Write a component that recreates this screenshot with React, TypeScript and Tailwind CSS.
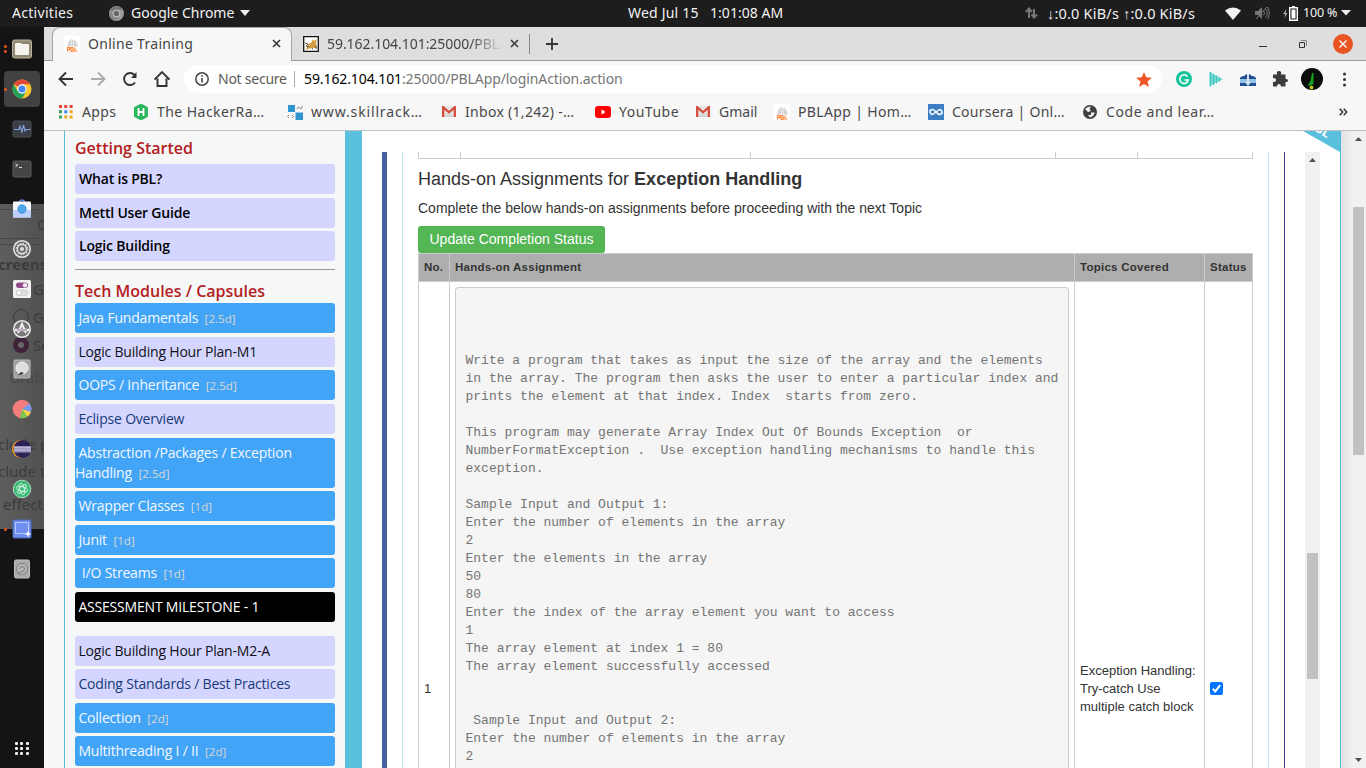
import React from "react";

const ui = "font-['Noto_Sans',sans-serif]";

const Chrome = ({ mono = false, s = 20 }: { mono?: boolean; s?: number }) => (
  <svg width={s} height={s} viewBox="0 0 20 20" className="block shrink-0">
    <circle cx="10" cy="10" r="10" fill={mono ? "#9a9a9a" : "#fbc62f"} />
    <path d="M10 10 1.3 5A10 10 0 0 1 18.7 5H10z" fill={mono ? "#777" : "#e14a3b"} />
    <path d="M1.3 5A10 10 0 0 0 10 20l4.3-7.5L10 10 5.7 12.5z" fill={mono ? "#868686" : "#27a05a"} />
    <circle cx="10" cy="10" r="4.9" fill={mono ? "#c8c8c8" : "#fff"} />
    <circle cx="10" cy="10" r="3.7" fill={mono ? "#666" : "#4285f4"} />
  </svg>
);

const Pbl = () => (
  <svg width="16" height="16" viewBox="0 0 16 16" className="block shrink-0">
    <path d="M0 0h16v16H0z" fill="#fff" />
    <path d="M3 10.500Q4 5 7 3v7.500zM7.500 10.500V2.500l2 2v6zM10 10.500V3q3 3 4 7.500z" fill="#d5d5d5" />
    <path d="M3.500 15.500v-4h1.700q1.300 1.200 0 2.200H3.500M7 11.500v4h1.800q1.500-1 0-2 1-1.200-.3-2zM11 11.500v3.500h2.500" fill="none" stroke="#ff7f2a" strokeWidth="1.100" />
  </svg>
);

const Gmail = () => (
  <svg width="14" height="11" viewBox="0 0 14 11" className="block shrink-0">
    <path d="M0 0h14v11H0z" fill="#e6e6e6" />
    <path d="M2 11 7 5.500 12 11z" fill="#d4d4d4" />
    <path d="M1.200 11V1.200L7 6.300l5.800-5.100V11" fill="none" stroke="#d54b3d" strokeWidth="2.300" />
  </svg>
);

const CloseX = () => (
  <svg width="9" height="9" viewBox="0 0 9 9" className="block shrink-0">
    <path d="m1 1 7 7M8 1 1 8" stroke="#3c3c3c" strokeWidth="1.700" />
  </svg>
);

function TopBar() {
  return (
    <div className={`flex h-[27px] shrink-0 items-center bg-[#1d1d1d] pb-px text-[14px] leading-[26px] whitespace-pre text-[#f2f2f2] ${ui}`}>
      <div className="w-[109px] pl-3 tracking-[0.3px]">Activities</div>
      <Chrome mono s={15} />
      <div className="w-[116px] pl-[7px]">Google Chrome</div>
      <svg width="10" height="6" viewBox="0 0 10 6"><path d="M0 0h10L5 6z" fill="#eee" /></svg>
      <div className="ml-[378px] w-[82px] tracking-[0.2px]">Wed Jul 15</div>
      <div className="w-[315px] tracking-[0.05px]">1:01:08 AM</div>
      <svg width="13" height="12" viewBox="0 0 13 12"><path d="M4 11V3M1 5l3-3.500L7 5M9 2v7M6.500 7.500 9 10.500l3-3" stroke="#777" strokeWidth="2" fill="none" /></svg>
      <div className="ml-[9px] w-[178px] text-[14.500px] tracking-[0.200px]">↓:0.0 KiB/s ↑:0.0 KiB/s</div>
      <svg width="16" height="13" viewBox="0 0 16 13"><path d="M0 3.500Q8-2.500 16 3.500L8 13z" fill="#f4f4f4" /></svg>
      <svg width="16" height="16" viewBox="0 0 16 16" className="ml-[13px]" fill="none" stroke="#777"><path d="M1 6h3l4-4v12l-4-4H1z" fill="#777" stroke="none" /><path d="M9.500 5.500q2 2.500 0 5M11.500 3.500q3.500 4.500 0 9M13.500 2q3.500 6 0 12M2 14 13 2" /></svg>
      <svg width="15" height="15" viewBox="0 0 15 15" className="ml-[13px]"><path d="M3.500 3 0 8h2l-.5 4L4.500 7h-2z" fill="#aaa" /><path d="M6.700 1.700h7.600v12.600H6.700zM9 .7h3" fill="none" stroke="#fff" strokeWidth="1.400" /><path d="M8.500 3.500h4v9h-4z" fill="#fff" /></svg>
      <div className="ml-[5px] w-[38px] text-[12.500px] tracking-[-0.2px]">100 %</div>
      <svg width="10" height="6" viewBox="0 0 10 6"><path d="M0 0h10L5 5.500z" fill="#eee" /></svg>
    </div>
  );
}

const dockIcons: { dot?: number; active?: boolean; el: React.ReactNode }[] = [
  { dot: 2, el: <><rect x="4.500" y="5" width="19" height="18" rx="2" fill="#8f8873" stroke="#b9b39f" /><path d="M8 8h5l1 1h6q1 0 1 1v9q0 1-1 1H8q-1 0-1-1V9q0-1 1-1z" fill="#f5f3ee" /></> },
  { dot: 1, active: true, el: <g transform="translate(4.500 4.500) scale(.95)"><circle cx="10" cy="10" r="10" fill="#fbc62f" /><path d="M10 10 1.300 5A10 10 0 0 1 18.700 5H10z" fill="#e14a3b" /><path d="M1.300 5A10 10 0 0 0 10 20l4.300-7.500L10 10 5.700 12.500z" fill="#27a05a" /><circle cx="10" cy="10" r="4.900" fill="#fff" /><circle cx="10" cy="10" r="3.700" fill="#4285f4" /></g> },
  { el: <><rect x="5" y="6" width="18" height="16" rx="1.500" fill="#3b3d44" stroke="#4c4e55" /><path d="M6 14.500h5l1-3.500 2 6 1.500-7 1.500 6 1-1.500h4.500" fill="none" stroke="#88a4e8" strokeWidth="1.100" /></> },
  { el: <><rect x="5" y="6" width="18" height="16" rx="1.500" fill="#454545" stroke="#5c5c5c" /><path d="m7.500 9 2.500 1.300-2.500 1.300M11 12.500h3" fill="none" stroke="#ddd" /></> },
  { el: <><path d="M11 7q3-4 6 0" fill="none" stroke="#5e83d5" strokeWidth="1.300" /><rect x="5" y="6.500" width="18" height="16" rx="1" fill="#f4f6fa" /><path d="M5 15h18v7.500H5z" fill="#bdcffa" /><circle cx="14" cy="14" r="4.500" fill="#1a86dc" /><path d="M9.500 14h9M14 9.500v9M12 10v8M16 10v8M10 12h8M10 16h8" stroke="#9fd0f6" strokeWidth=".5" /></> },
  { el: <><circle cx="14" cy="14" r="8.300" fill="#6b6b6b" stroke="#e9e9e9" strokeWidth="1.500" /><circle cx="14" cy="14" r="4.500" fill="none" stroke="#e0e0e0" strokeWidth="1.300" /><circle cx="14" cy="14" r="5.600" fill="none" stroke="#e0e0e0" strokeWidth="1.300" strokeDasharray="1.500 1.430" /><circle cx="14" cy="14" r="2" fill="#e0e0e0" /></> },
  { el: <><rect x="5" y="5" width="18" height="18" rx="1.500" fill="#f3f0f0" /><rect x="8" y="7.500" width="12" height="5.500" rx="2.700" fill="#924a8b" /><circle cx="17" cy="10.200" r="2.200" fill="#eee" /><rect x="8" y="15" width="12" height="5.500" rx="2.700" fill="#ddd" stroke="#bbb" strokeWidth=".5" /><circle cx="10.800" cy="17.700" r="2.400" fill="#fff" stroke="#aaa" strokeWidth=".5" /></> },
  { el: <><circle cx="14" cy="14" r="8.300" fill="#777" stroke="#ececec" strokeWidth="1.500" /><path d="m10 18 4-9 4 9" fill="none" stroke="#eee" strokeWidth="2" /><path d="M7 15h14" stroke="#eee" strokeWidth="2.400" /><path d="M9 15h10" stroke="#8d5a86" strokeWidth=".9" /></> },
  { el: <><rect x="6" y="5" width="16" height="18" rx="1" fill="#9f9f9f" stroke="#bbb" /><circle cx="14" cy="13" r="6" fill="#dedede" stroke="#f5f5f5" /><path d="m10 20 3-3 3 1q-2 2-6 2z" fill="#333" /></> },
  { el: <><circle cx="14" cy="14" r="9.300" fill="#f47d7d" /><path d="M14 14 21.500 8.500A9.300 9.300 0 0 1 22.800 17z" fill="#739af0" /><path d="m14 14 8.800 3a9.300 9.300 0 0 1-3.500 4.700z" fill="#f6d24c" /><path d="m14 14 5.300 7.700A9.300 9.300 0 0 1 12 23z" fill="#7ac84b" /></> },
  { el: <><circle cx="13" cy="14" r="9" fill="#f39a1f" /><circle cx="14.500" cy="14" r="9" fill="#2c2255" /><path d="M6 11h17v6.500H6z" fill="#9a93bd" /><path d="M6 12.700h17M6 15h17" stroke="#cfcbe2" strokeWidth=".8" /></> },
  { el: <><circle cx="14" cy="14" r="8.800" fill="#3fba78" stroke="#c3ecd5" strokeWidth=".8" /><g fill="none" stroke="#d9f6e6" strokeWidth=".9"><ellipse cx="14" cy="14" rx="5.800" ry="2.300" transform="rotate(15 14 14)" /><ellipse cx="14" cy="14" rx="5.800" ry="2.300" transform="rotate(75 14 14)" /><ellipse cx="14" cy="14" rx="5.800" ry="2.300" transform="rotate(135 14 14)" /></g></> },
  { dot: 1, el: <><rect x="5" y="5" width="18" height="18" rx="1" fill="#6f8ff2" stroke="#4c68bd" /><rect x="7.500" y="7.500" width="13" height="11" fill="none" stroke="#fff" strokeDasharray="1 1" /><path d="M20 16.500v5M17.500 19h5" stroke="#fff" strokeWidth="1.300" /></> },
  { el: <><rect x="6.500" y="5" width="15" height="18" rx="1.500" fill="#a9a9a9" stroke="#c4c4c4" /><circle cx="14" cy="14" r="5.500" fill="#b8b8b8" stroke="#808080" /><path d="M11.500 14a2.500 2.500 0 1 1 2.500 2.500l-4 2" fill="none" stroke="#777" /></> },
];

function Dock() {
  return (
    <div className="relative flex w-11 shrink-0 flex-col overflow-hidden bg-[#141414] pt-[2px]">
      <div className={`absolute inset-x-0 top-[177px] h-[325px] bg-gradient-to-r from-[#5e5e5e] to-[#515151] text-[15px] leading-[20px] whitespace-pre text-[#3c3c3c] ${ui}`}>
        <div className="absolute inset-x-0 top-[5px] h-px bg-[#474747]" />
        <div className="absolute inset-x-0 top-[34px] h-px bg-[#474747]" />
        <div className="absolute inset-x-0 top-[40px] h-px bg-[#474747]" />
        <div className="absolute left-[37px] top-[10px]">Or</div>
        <div className="absolute left-[-2px] top-[50px] font-bold">creensh</div>
        <div className="absolute left-[33px] top-[75px]">Gr</div>
        <div className="absolute left-[33px] top-[103px]">Gr</div>
        <div className="absolute left-[33px] top-[131px]">Se</div>
        <div className="absolute left-[9px] top-[163px] text-[#484848]">Grab b</div>
        <div className="absolute left-[-2px] top-[230px]">clude p</div>
        <div className="absolute left-[-2px] top-[257px]">clude t</div>
        <div className="absolute left-[3px] top-[290px]">effect</div>
        <div className="absolute left-[13px] top-[105px] size-[16px] rounded-full border border-[#3b3b3b]" />
        <div className="absolute left-[13px] top-[133px] size-[16px] rounded-full border-[5px] border-[#3e2339] bg-[#666]" />
      </div>
      {dockIcons.map((d, i) => (
        <div key={i} className="relative flex h-10 shrink-0 items-center">
          <div className="flex w-1 flex-col items-end gap-[2px] pl-1">
            {Array.from({ length: d.dot ?? 0 }, (_, k) => <div key={k} className="relative left-[3px] size-[3px] shrink-0 rounded-full bg-[#e95420]" />)}
          </div>
          <div className={`flex size-9 items-center justify-center rounded ${d.active ? "bg-[#424242]" : ""}`}>
            <svg width="28" height="28" viewBox="0 0 28 28">{d.el}</svg>
          </div>
        </div>
      ))}
      <div className="mt-[153px] ml-[15px] grid w-[14px] grid-cols-3 gap-[2px]">
        {Array.from({ length: 9 }, (_, k) => <div key={k} className="size-[3px] rounded-[1px] bg-[#eee]" />)}
      </div>
    </div>
  );
}

function Tabs() {
  return (
    <div className={`flex h-[34px] shrink-0 border-b border-[#9c9c9c] bg-[#dedede] text-[14px] text-[#444] ${ui}`}>
      <div className="relative z-10 -mb-px ml-[8px] flex w-[240px] items-center rounded-t-lg border border-b-0 border-[#a6a6a6] bg-[#f7f7f7] pb-[2px] pl-[11px]">
        <Pbl />
        <div className="ml-2 w-[184px] tracking-[0.3px]">Online Training</div>
        <CloseX />
      </div>
      <div className="flex items-center pl-[11px]">
        <svg width="16" height="16" viewBox="0 0 16 16"><path d="M.7.700h14.600v14.600H.7z" fill="#fff" stroke="#111" strokeWidth="1.300" /><path d="m5 8 3-1 2-4 1 2 3-2-1 4 1 5H9l-4 1-2 1z" fill="#d39b42" /><path d="m2 7 3 1-2 2 3 1M9 12l1 1.500M13 10v3" stroke="#555" fill="none" /></svg>
        <div className="ml-2 w-[175px] overflow-hidden tracking-[-0.05px] whitespace-nowrap [mask-image:linear-gradient(to_right,#000_82%,transparent)]">59.162.104.101:25000/PBLApp</div>
        <div className="ml-[8px]"><CloseX /></div>
        <div className="ml-[10px] h-5 w-px bg-[#888]" />
        <svg width="12" height="12" viewBox="0 0 12 12" className="ml-4"><path d="M6 0v12M0 6h12" stroke="#333" strokeWidth="1.800" /></svg>
      </div>
      <div className="ml-auto flex items-center pr-[13px]">
        <svg width="8" height="12" viewBox="0 0 8 12"><path d="M0 8.500h8" stroke="#333" /></svg>
        <svg width="8" height="8" viewBox="0 0 8 8" className="ml-8"><path d="M.5 2.500h5v5h-5z" fill="none" stroke="#333" /><path d="M2 .5h5.500V6" fill="none" stroke="#888" /></svg>
        <svg width="20" height="20" viewBox="0 0 20 20" className="ml-[26px]"><circle cx="10" cy="10" r="10" fill="#e95420" /><path d="m6.500 6.500 7 7M13.500 6.500l-7 7" stroke="#fff" strokeWidth="1.400" /></svg>
      </div>
    </div>
  );
}

function Toolbar() {
  return (
    <div className={`flex h-[36px] shrink-0 items-center pl-[14px] text-[14px] ${ui}`}>
      <svg width="112" height="18" viewBox="0 0 112 18" fill="none" strokeWidth="1.900">
        <path d="M15 9H2M8 2.500 1.500 9 8 15.500" stroke="#333" />
        <path d="M33 9h13M40 2.500 46.500 9 40 15.500" stroke="#aaa" />
        <path d="M77 12.500A6 6 0 1 1 76.500 5" stroke="#333" />
        <path d="M73 8h5.500V2z" fill="#333" />
        <path d="M99.500 8.500v7.500h9V8.500M96.500 9.700 104 2.200l7.500 7.500" stroke="#333" />
      </svg>
      <div className="ml-[14px] flex h-7 w-[978px] items-center rounded-full bg-white pl-[11px]">
        <svg width="14" height="14" viewBox="0 0 14 14"><circle cx="7" cy="7" r="6.200" fill="none" stroke="#444" strokeWidth="1.500" /><path d="M7 6v4.500M7 3.200v1.600" stroke="#444" strokeWidth="1.600" /></svg>
        <div className="ml-[9px] w-[76px] pb-px tracking-[-0.25px] text-[#5a5a5a]">Not secure</div>
        <div className="h-4 w-px bg-[#aaa]" />
        <div className="ml-[9px] pb-px tracking-[-0.1px] text-[#767676]"><span className="text-black">59.162.104.101</span>:25000/PBLApp/loginAction.action</div>
        <svg width="16" height="15" viewBox="0 0 24 23" className="mr-[10px] ml-auto"><path d="m12 0 3.400 8 8.600.8-6.500 5.700 2 8.500-7.500-4.500L4.500 23l2-8.500L0 8.800 8.600 8z" fill="#f0562a" /></svg>
      </div>
      <svg width="176" height="24" viewBox="0 0 176 24" className="ml-3">
        <circle cx="10" cy="12" r="8" fill="#15c39a" /><path d="M13.500 9.500a4.300 4.300 0 1 0 .8 3.500H10.500" fill="none" stroke="#fff" strokeWidth="1.600" />
        <path d="M35.500 5 49 12.300 35.500 19z" fill="#7cdcd6" /><path d="M36.500 5v14.500M39.500 7v11M42.500 8.500v8M45.500 10.500v4" stroke="#3fc4bd" strokeWidth="1.300" />
        <path d="M66 11q1-2 4-2 4-4 8 0 3 0 4 2v8H66z" fill="#234f91" /><path d="M66 12h16v4H66z" fill="#8fc4e6" /><path d="M73 7h2v8h2l-3 4-3-4h2z" fill="#dde6f5" />
        <path d="M99 7.500h4q-1-3.500 2-3.500t2 3.500h4.500V12q2.500-.5 2.500 1.500t-2.500 1.500v4.500H107q0-2.500-2-2.500t-2 2.500h-4V15q3 0 3-2t-3-2z" fill="#3c3c3c" />
        <circle cx="138" cy="12" r="11" fill="#0b0d0a" /><path d="m138 6-1.500 8-3 5 4-1 2-1V6z" fill="#14a31e" /><circle cx="137.500" cy="20.500" r="1.900" fill="#b7c717" />
        <circle cx="170.500" cy="7" r="1.500" fill="#333" /><circle cx="170.500" cy="12.500" r="1.500" fill="#333" /><circle cx="170.500" cy="18" r="1.500" fill="#333" />
      </svg>
    </div>
  );
}

function Bookmarks() {
  return (
    <div className={`flex h-[34px] shrink-0 items-center border-b border-[#c0c0c0] pb-[4px] pl-[15px] text-[14px] leading-[20px] whitespace-pre text-[#484848] ${ui}`}>
      <svg width="14" height="14" viewBox="0 0 14 14"><path d="M0 0h3v3H0zM5.300 0h3v3h-3zM10.600 0h3v3h-3z" fill="#e5432d" /><path d="M0 5.300h3v3H0zM0 10.600h3v3H0z" fill="#39a257" /><path d="M5.300 5.300h3v3h-3z" fill="#4285f4" /><path d="M10.600 5.300h3v3h-3zM5.300 10.600h3v3h-3zM10.600 10.600h3v3h-3z" fill="#f2a816" /></svg>
      <div className="ml-[9px] w-[51px] tracking-[0.4px]">Apps</div>
      <svg width="16" height="16" viewBox="0 0 16 16"><path d="m8 0 6.500 3.500v9L8 16l-6.500-3.500v-9z" fill="#2ab65b" stroke="#2ab65b" /><path d="M5.500 4v8M10.500 4v8M5.500 8h5" stroke="#fff" strokeWidth="1.800" /></svg>
      <div className="ml-2 w-[130px] tracking-[0.45px]">The HackerRa…</div>
      <svg width="16" height="16" viewBox="0 0 16 16"><path d="M1 1h7v7H1zM8.500 8.500H16V16H8.500z" fill="#3195cf" /><path d="m10 5 1.500-2L14 5l1.500-3M2 11l-1.500 1.500L2 14M5 11l1.500 1.500L5 14" stroke="#888" fill="none" /></svg>
      <div className="ml-[8px] w-[131px] tracking-[0.85px]">www.skillrack…</div>
      <Gmail />
      <div className="ml-[9px] w-[130px] tracking-[0.3px]">Inbox (1,242) -…</div>
      <svg width="16" height="12" viewBox="0 0 16 12"><rect width="16" height="12" rx="3" fill="#f00" /><path d="m6.500 3.300 4 2.700-4 2.700z" fill="#fff" /></svg>
      <div className="ml-2 w-[77px] tracking-[0.5px]">YouTube</div>
      <Gmail />
      <div className="ml-[9px] w-[55px]">Gmail</div>
      <Pbl />
      <div className="ml-2 w-[130px] tracking-[0.35px]">PBLApp | Hom…</div>
      <svg width="16" height="16" viewBox="0 0 16 16"><path d="M0 0h16v16H0z" fill="#3d7fc5" /><path d="M8 8q-2.500-3-4.500-2.300T2 8t1.500 2.300T8 8t4.500-2.300T14 8t-1.500 2.300T8 8z" stroke="#fff" strokeWidth="1.500" fill="none" /></svg>
      <div className="ml-2 w-[131px] tracking-[0.25px]">Coursera | Onl…</div>
      <svg width="14" height="14" viewBox="0 0 14 14"><circle cx="7" cy="7" r="7" fill="#3f3f3f" /><path d="M2 4q3-3 6-2.500L6.500 4l1.500 2-3 1zM8 7.500h4L10 11 7 12.500l-2-2.500h3z" fill="#f2f2f2" /></svg>
      <div className="ml-[9px] w-[120px] tracking-[0.6px]">Code and lear…</div>
      <svg width="9" height="8" viewBox="0 0 9 8" className="mr-[18px] ml-auto"><path d="m.7.700 3 3.300-3 3.300M4.700.700l3 3.300-3 3.300" stroke="#333" strokeWidth="1.500" fill="none" /></svg>
    </div>
  );
}

const blue = "bg-[#42a4f7] text-[#f2f8ff]";
const lav = "bg-[#d5d6ff] text-[#101018]";
const lavBlue = "bg-[#d5d6ff] text-[#173a78]";

const modules: { t: string; d?: string; c: string; m: string }[] = [
  { t: "Java Fundamentals", d: "[2.5d]", c: blue, m: "mb-1 h-[30px]" },
  { t: "Logic Building Hour Plan-M1", c: lav, m: "mb-[3px] h-[30px]" },
  { t: "OOPS / Inheritance", d: "[2.5d]", c: blue, m: "mb-1 h-[30px]" },
  { t: "Eclipse Overview", c: lavBlue, m: "mb-1 h-[30px]" },
  { t: "Abstraction /Packages / Exception Handling", d: "[2.5d]", c: blue, m: "mb-[3px] h-[50px]" },
  { t: "Wrapper Classes", d: "[1d]", c: blue, m: "mb-1 h-[30px]" },
  { t: "Junit", d: "[1d]", c: blue, m: "mb-[3px] h-[30px]" },
  { t: "\u00a0I/O Streams", d: "[1d]", c: blue, m: "mb-1 h-[30px]" },
  { t: "ASSESSMENT MILESTONE - 1", c: "bg-black text-white", m: "mb-[14px] h-[30px]" },
  { t: "Logic Building Hour Plan-M2-A", c: lav, m: "mb-[3px] h-[30px]" },
  { t: "Coding Standards / Best Practices", c: lavBlue, m: "mb-1 h-[30px]" },
  { t: "Collection", d: "[2d]", c: blue, m: "mb-[3px] h-[30px]" },
  { t: "Multithreading I / II", d: "[2d]", c: blue, m: "h-[30px]" },
];

function Sidebar() {
  return (
    <div className="ml-5 w-[281px] shrink-0 overflow-hidden border-l border-[#52bcd6] pr-[10px] pl-[10px] font-['Open_Sans',sans-serif] text-[14px] leading-[20px] tracking-[-0.2px]">
      <div className="h-[33px] pt-[5px] text-[16px] leading-[24px] font-semibold tracking-normal text-[#b3201f]">Getting Started</div>
      <div className="mb-1 h-[30px] rounded-[3px] bg-[#d5d6ff] py-[5px] pl-1 font-semibold text-black">What is PBL?</div>
      <div className="mb-[3px] h-[30px] rounded-[3px] bg-[#d5d6ff] py-[5px] pl-1 font-semibold text-black">Mettl User Guide</div>
      <div className="h-[30px] rounded-[3px] bg-[#d5d6ff] py-[5px] pl-1 font-semibold text-black">Logic Building</div>
      <div className="mt-2 h-px bg-[#999]" />
      <div className="h-[33px] pt-[9px] text-[16px] leading-[24px] font-semibold tracking-normal text-[#b3201f]">Tech Modules / Capsules</div>
      {modules.map((m) => (
        <div key={m.t} className={`rounded-[3px] py-[5px] ${m.c} ${m.m}`}>
          {"\u00a0"}{m.t}{m.d && <>{"\u00a0"}<span className="text-[11.500px] leading-[10px] tracking-[0.05px] text-[#dcd8d2]">{"\u00a0"}{m.d}</span></>}
        </div>
      ))}
    </div>
  );
}

const problem = `Write a program that takes as input the size of the array and the elements
in the array. The program then asks the user to enter a particular index and
prints the element at that index. Index  starts from zero.

This program may generate Array Index Out Of Bounds Exception  or
NumberFormatException .  Use exception handling mechanisms to handle this
exception.

Sample Input and Output 1:
Enter the number of elements in the array
2
Enter the elements in the array
50
80
Enter the index of the array element you want to access
1
The array element at index 1 = 80
The array element successfully accessed


 Sample Input and Output 2:
Enter the number of elements in the array
2`;

function Assignments() {
  return (
    <div className="ml-[15px] flex w-[867px] shrink-0 border-r border-l border-[#bce8ee] font-['Liberation_Sans',sans-serif] text-[#333]">
      <div className="ml-[14px] flex w-[837px] flex-col pl-px">
        <div className="flex h-[7px] w-[835px] shrink-0 border-x border-b border-[#ccc]">
          <div className="w-[42px] border-r border-[#ccc]" />
          <div className="w-[290px] border-r border-[#ccc]" />
          <div className="w-[305px] border-r border-[#ccc]" />
          <div className="w-[82px] border-r border-[#ccc]" />
        </div>
        <div className="mt-[8px] text-[18px] leading-[24px]">Hands-on Assignments for <b>Exception Handling</b></div>
        <div className="mt-[7px] text-[14px] leading-[20px]">Complete the below hands-on assignments before proceeding with the next Topic</div>
        <button className="mt-[8px] h-[27px] w-[187px] shrink-0 rounded-[3px] bg-[#53b553] pb-px text-[14px] tracking-[0.03px] text-white">Update Completion Status</button>
        <div className="flex w-[835px] flex-1 flex-col border border-b-0 border-[#ccc]">
          <div className="grid h-7 shrink-0 grid-cols-[31px_625px_130px_47px] border-b border-[#ccc] bg-[#aeaeae] text-[11.500px] leading-[26px] font-bold tracking-[0.250px]">
            <div className="border-r border-[#ccc] pl-[5px]">No.</div>
            <div className="border-r border-[#ccc] pl-[5px]">Hands-on Assignment</div>
            <div className="border-r border-[#ccc] pl-[5px]">Topics Covered</div>
            <div className="pl-[5px]">Status</div>
          </div>
          <div className="grid flex-1 grid-cols-[31px_625px_130px_47px] text-[13px] leading-[18px]">
            <div className="border-r border-[#ccc] pt-[398px] pl-[5px]">1</div>
            <div className="border-r border-[#ccc] px-[5px] pt-[5px]">
              <pre className="h-[600px] rounded-t border border-b-0 border-[#ccc] bg-[#f5f5f5] pt-[64px] pl-[9.500px] font-['Liberation_Mono',monospace] text-[13px] leading-[18px] text-[#747474]">{problem}</pre>
            </div>
            <div className="border-r border-[#ccc] pt-[380px] pl-[5px]">Exception Handling:<br />Try-catch Use<br />multiple catch block</div>
            <div className="pt-[400px] pl-[5px]">
              <svg width="13" height="13" viewBox="0 0 13 13"><rect width="13" height="13" rx="2" fill="#0075ff" /><path d="m2.800 6.800 2.500 2.600 4.900-6.200" fill="none" stroke="#fff" strokeWidth="2" /></svg>
            </div>
          </div>
        </div>
      </div>
    </div>
  );
}

export default function App() {
  return (
    <div className="flex h-[768px] w-[1366px] flex-col overflow-hidden">
      <TopBar />
      <div className="flex min-h-0 flex-1">
        <Dock />
        <div className="flex min-w-0 flex-1 flex-col bg-[#f7f7f7]">
          <Tabs />
          <Toolbar />
          <Bookmarks />
          <div className="flex min-h-0 flex-1 overflow-hidden bg-[#f6f8f7]">
            <Sidebar />
            <div className="w-[17px] shrink-0 bg-[#5bbfde]" />
            <div className="relative flex min-h-0 w-[979px] shrink-0 border-r border-[#52bcd6] bg-white pt-[21px] pl-5">
              <div className="w-[5px] shrink-0 bg-[#44619d]" />
              <div className="flex w-[898px] shrink-0 overflow-hidden border-r border-[#3d3590]">
                <Assignments />
              </div>
              <div className="ml-5 flex w-[15px] flex-col items-center bg-[#f1f1f1] pt-[6px]">
                <svg width="7" height="4" viewBox="0 0 7 4"><path d="M0 4h7L3.500 0z" fill="#505050" /></svg>
                <div className="mt-[391px] h-[126px] w-[11px] bg-[#c1c1c1]" />
              </div>
              <div className="absolute top-0 right-0 h-[21px] w-[37px] overflow-hidden bg-[#5bbfde] [clip-path:polygon(0_0,100%_0,100%_100%)]">
                <div className="absolute -top-[11px] left-[5px] rotate-[31deg] font-['Open_Sans',sans-serif] text-[12px] font-bold text-white">PBL</div>
              </div>
            </div>
            <div className="w-[10px] shrink-0 bg-gradient-to-r from-[#dfe3e3] to-[#efefef]" />
            <div className="flex w-[15px] shrink-0 flex-col items-center bg-[#f1f1f1] pt-[6px]">
              <svg width="7" height="4" viewBox="0 0 7 4"><path d="M0 4h7L3.500 0z" fill="#505050" /></svg>
              <div className="mt-[66px] h-[248px] w-[11px] bg-[#c1c1c1]" />
              <svg width="7" height="4" viewBox="0 0 7 4" className="mt-[303px]"><path d="M0 0h7L3.500 4z" fill="#505050" /></svg>
            </div>
          </div>
        </div>
      </div>
    </div>
  );
}
